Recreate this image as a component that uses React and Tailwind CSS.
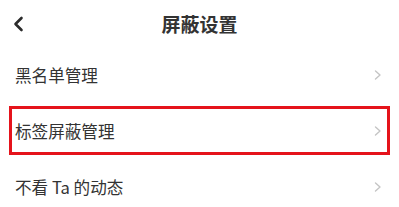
import React from 'react'

const ROWS = ['黑名单管理', '标签屏蔽管理', '不看 Ta 的动态']

function Chevron() {
  return (
    <svg width="8" height="10" viewBox="0 0 8 10" className="block">
      <path d="M1.5 1 L6 5 L1.5 9" fill="none" stroke="#c4c4c4" strokeWidth="1.4" strokeLinecap="round" strokeLinejoin="round" />
    </svg>
  )
}

export default function App() {
  return (
    <div className="w-[399px] h-[207px] overflow-hidden bg-white text-[#333] font-['Noto_Sans_CJK_SC','Noto_Sans',sans-serif]">
      {/* Header */}
      <div className="h-[47px] flex items-center px-[12px]">
        <div className="w-[40px] flex items-center">
          <svg width="14" height="16" viewBox="0 0 14 16" className="block">
            <path d="M9.5 2 L3.5 8 L9.5 14" fill="none" stroke="#2b2b2b" strokeWidth="2.6" strokeLinecap="round" strokeLinejoin="round" />
          </svg>
        </div>
        <div className="flex-1 text-center text-[19px] font-bold leading-none tracking-[0px]">屏蔽设置</div>
        <div className="w-[40px]" />
      </div>

      {/* Rows */}
      {ROWS.map((label, i) => (
        <div key={label} className="relative h-[56px] flex items-center justify-between pl-[15px] pr-[17px]">
          <span className="text-[16.6px] leading-none">{label}</span>
          <Chevron />
          {i === 1 && (
            <div className="absolute left-[9px] right-[9px] top-[3px] bottom-[4px] border-[3px] border-[#e5131b]" />
          )}
        </div>
      ))}
    </div>
  )
}
